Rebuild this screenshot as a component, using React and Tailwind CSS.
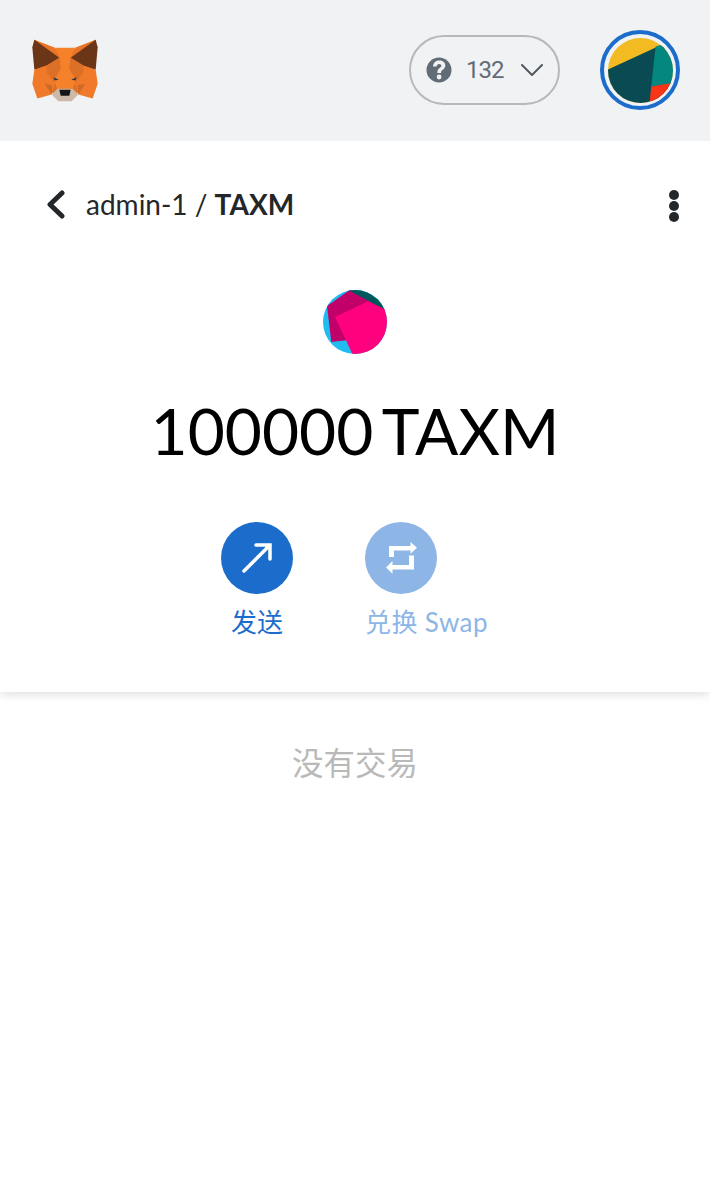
import React from 'react';

const font = '[font-family:Lato,"Noto_Sans_CJK_SC",sans-serif]';

const FoxLogo = () => (
  <svg width="70" height="67" viewBox="90 110 210 200">
    <polygon points="103,118 195,160 287,118 278,250 195,300 112,250" fill="#d96f24" />
    <polygon points="165,142 225,142 212,172 208,205 182,205 178,172" fill="#f5822a" />
    <polygon points="103,118 165,142 178,172" fill="#ea7426" />
    <polygon points="287,118 225,142 212,172" fill="#ea7426" />
    <polygon points="103,118 178,172 140,195 103,208 97,140" fill="#6b3517" />
    <polygon points="287,118 212,172 250,195 287,208 293,140" fill="#6b3517" />
    <polygon points="178,172 182,205 162,240 140,215 140,195" fill="#dc7027" />
    <polygon points="212,172 208,205 228,240 250,215 250,195" fill="#dc7027" />
    <polygon points="103,208 140,195 140,215 165,250 155,282 112,294 97,250" fill="#f0792a" />
    <polygon points="287,208 250,195 250,215 225,250 235,282 278,294 293,250" fill="#f0792a" />
    <polygon points="134,250 157,254 155,282" fill="#cf6a24" />
    <polygon points="256,250 233,254 235,282" fill="#cf6a24" />
    <polygon points="182,205 208,205 228,240 218,265 172,265 162,240" fill="#f5822a" />
    <polygon points="160,230 176,238 164,240" fill="#233447" />
    <polygon points="230,230 214,238 226,240" fill="#233447" />
    <polygon points="155,282 172,265 218,265 235,282 215,302 175,302" fill="#cdb9a9" />
    <polygon points="178,268 212,268 208,286 182,286" fill="#161616" />
  </svg>
);

const Jazzicon = () => (
  <svg width="65" height="65" viewBox="623 53 194 194" className="rounded-full">
    <rect x="623" y="53" width="194" height="194" fill="#f2bb22" />
    <polygon points="600,158 790,70 830,260 600,260" fill="#0a4a52" />
    <polygon points="765,78 830,60 830,186 752,198" fill="#03877f" />
    <polygon points="752,198 830,184 830,260 746,260" fill="#fa3417" />
  </svg>
);

const TokenIcon = () => (
  <svg width="64" height="64" viewBox="70 44 192 192" className="rounded-full">
    <rect x="70" y="44" width="192" height="192" fill="#1fbcf0" />
    <polygon points="82,92 150,44 262,104 140,195 95,200" fill="#c2006a" />
    <polygon points="145,44 270,44 270,110" fill="#00585a" />
    <polygon points="106,125 205,78 270,110 270,240 160,240" fill="#ff007f" />
  </svg>
);

const App = () => {
  return (
    <div className={`w-full min-h-screen bg-white ${font}`}>
      <header className="relative z-10 h-[141px] pb-[1px] bg-[#f0f2f4] flex items-center px-[30px]">
        <FoxLogo />
        <div className="ml-auto flex items-center">
          <div className="w-[151px] h-[70px] rounded-full border-2 border-[#b5b9bd] flex items-center pl-[15px] mr-10">
            <svg width="26" height="26" viewBox="0 0 26 26">
              <circle cx="13" cy="13" r="12.5" fill="#626c77" />
              <path d="M7 9.500C7.400 5.600 10 3.600 13.300 3.600c3.500 0 6 2 6 5 0 4-4.300 4-4.300 7.400h-3.700c0-4.900 4.100-5 4.100-7.200 0-1.200-.9-1.900-2.200-1.900-1.500 0-2.300 1-2.600 2.700z" fill="#f0f2f4" />
              <circle cx="13.100" cy="20" r="2.400" fill="#f0f2f4" />
            </svg>
            <span className="ml-[14px] text-[24px] leading-none tracking-[-1px] text-[#626c77] [font-family:Roboto,sans-serif]">132</span>
            <svg className="ml-[18px]" width="22" height="12" viewBox="0 0 22 12" fill="none" stroke="#535a61" strokeWidth="2" strokeLinecap="round" strokeLinejoin="round">
              <path d="M1 1l10 10L21 1" />
            </svg>
          </div>
          <div className="w-20 h-20 rounded-full border-[4px] border-[#1c6dcb] flex items-center justify-center">
            <Jazzicon />
          </div>
        </div>
      </header>

      <section className="h-[551px] bg-white shadow-[0_2px_10px_rgba(0,0,0,0.14)] flex flex-col">
        <div className="h-[127px] flex items-center pl-[46px] pr-[31px] shrink-0">
          <svg width="20" height="29" viewBox="0 0 20 29" fill="none" stroke="#24272a" strokeWidth="5" strokeLinecap="round" strokeLinejoin="round">
            <path d="M16 3L4 14.500L16 26" />
          </svg>
          <div className="ml-[20px] -mt-[2px] text-[28px] leading-none text-[#24272a]">
            admin-1 / <span className="font-bold">TAXM</span>
          </div>
          <div className="ml-auto mt-[2px] flex flex-col gap-[1px]">
            <span className="w-[10px] h-[10px] rounded-full bg-[#24272a]" />
            <span className="w-[10px] h-[10px] rounded-full bg-[#24272a]" />
            <span className="w-[10px] h-[10px] rounded-full bg-[#24272a]" />
          </div>
        </div>
        <div className="flex flex-col items-center">
          <div className="mt-[22px]"><TokenIcon /></div>
          <div className="mt-[39px] text-[64px] leading-[76px] [word-spacing:-6px] text-black">100000 TAXM</div>
          <div className="mt-[53px] flex justify-center gap-[72px]">
            <div className="flex flex-col items-center w-[72px]">
              <div className="w-[72px] h-[72px] rounded-full bg-[#1c6dcb] flex items-center justify-center">
                <svg width="32" height="32" viewBox="0 0 32 32" fill="none" stroke="#fff" strokeWidth="3.500" strokeLinecap="round">
                  <path d="M3 29L29 3M15 3h14v14" />
                </svg>
              </div>
              <span className="mt-[12px] text-[26px] leading-[32px] text-[#1c6dcb]">发送</span>
            </div>
            <div className="flex flex-col items-start w-[124px]">
              <div className="w-[72px] h-[72px] rounded-full bg-[#8db6e7] flex items-center justify-center">
                <svg width="32" height="32" viewBox="0 0 32 32" fill="#fff">
                  <path d="M4 4h21.500V0L32 5.800 25.500 11.700V8.500H9V15H4z" />
                  <path d="M29 27.500H7.500V31.700L1 25.500 7.500 19V23H24V13.500h5z" />
                </svg>
              </div>
              <span className="mt-[12px] text-[26px] leading-[32px] tracking-[0.4px] text-[#8db6e7] whitespace-nowrap">兑换 Swap</span>
            </div>
          </div>
        </div>
      </section>

      <div className="mt-[51px] text-center text-[31.5px] leading-10 text-[#b9b9b9]">没有交易</div>
    </div>
  );
};

export default App;
